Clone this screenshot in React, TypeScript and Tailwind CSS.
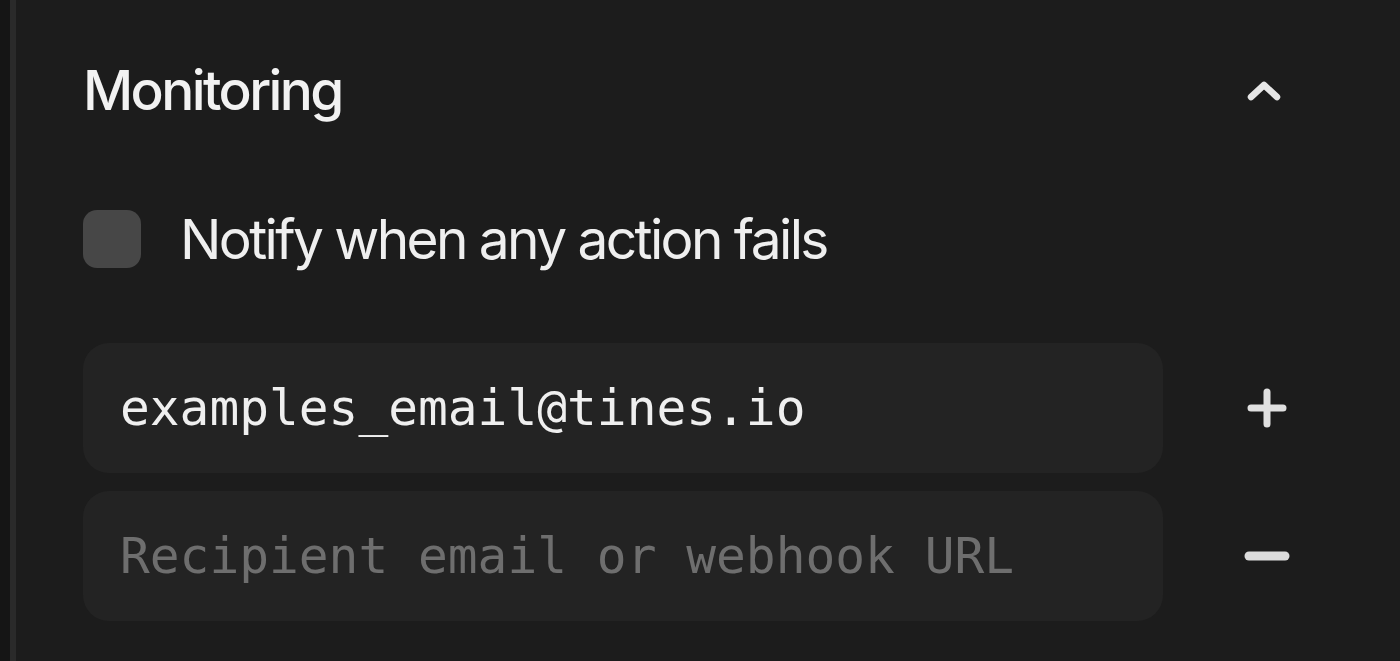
import React, { useState } from 'react';

const sans = { fontFamily: 'Inter, "Noto Sans", sans-serif' };

function ChevronUp() {
    return (
        <svg width="36" height="24" viewBox="0 0 36 24" fill="none">
            <path d="M5 19L18 7L31 19" stroke="#e6e6e6" strokeWidth="6.5" strokeLinecap="round" strokeLinejoin="round" />
        </svg>
    );
}

function PlusIcon() {
    return (
        <svg width="40" height="40" viewBox="0 0 40 40" fill="none">
            <path d="M20 4V36M4 20H36" stroke="#e0e0e0" strokeWidth="7" strokeLinecap="round" />
        </svg>
    );
}

function MinusIcon() {
    return (
        <svg width="46" height="16" viewBox="0 0 46 16" fill="none">
            <path d="M5 8H41" stroke="#dcdcdc" strokeWidth="9" strokeLinecap="round" />
        </svg>
    );
}

export default function App() {
    const [checked, setChecked] = useState(false);
    const [recipients, setRecipients] = useState(['examples_email@tines.io', '']);

    return (
        <div className="flex h-[661px] w-[1400px] overflow-hidden bg-[#1c1c1c]" style={sans}>
            <div className="w-[10px] bg-[#151515]" />
            <div className="w-[6px] bg-[#2a2a2a]" />

            <div className="flex flex-1 flex-col pl-[67px] pr-[29px] pt-[50px]">
                {/* Section header */}
                <div className="flex h-[80px] items-center">
                    <h2 className="flex-1 text-[55px] font-medium leading-none tracking-[-2.6px] text-[#f2f2f2]">Monitoring</h2>
                    <div className="flex w-[208px] justify-center pr-[6px]">
                        <ChevronUp />
                    </div>
                </div>

                {/* Checkbox */}
                <label className="mt-[80px] flex h-[58px] cursor-pointer items-center gap-[39px]">
                    <button
                        type="button"
                        onClick={() => setChecked(!checked)}
                        className="h-[58px] w-[58px] rounded-[14px] bg-[#474747]"
                    />
                    <span className="text-[55px] leading-none tracking-[-2.6px] text-[#efefef]">Notify when any action fails</span>
                </label>

                {/* Recipients */}
                <div className="mt-[75px] flex flex-col gap-[18px]">
                    {recipients.map((r, i) => (
                        <div key={i} className="flex items-center">
                            <input
                                value={r}
                                onChange={e => {
                                    const next = [...recipients];
                                    next[i] = e.target.value;
                                    setRecipients(next);
                                }}
                                placeholder="Recipient email or webhook URL"
                                className="h-[130px] w-[1080px] rounded-[26px] bg-[#232323] pl-[37px] text-[49.5px] text-[#efefef] outline-none placeholder:text-[#6e6e6e]"
                                style={{ fontFamily: '"DejaVu Sans Mono", "Liberation Mono", monospace' }}
                            />
                            <div className="flex flex-1 justify-center">
                                {i === 0 ? <PlusIcon /> : <MinusIcon />}
                            </div>
                        </div>
                    ))}
                </div>
            </div>
        </div>
    );
}
